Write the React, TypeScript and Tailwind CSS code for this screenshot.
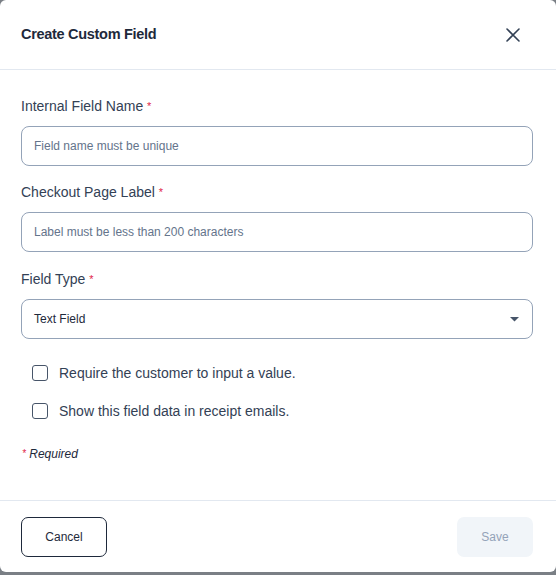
import React from "react";

function Label({ text }: { text: string }) {
  return (
    <div className="h-[20px] text-[14px] leading-[20px] text-[#334155]">
      {text} <span className="text-[#e11d48] text-[11px] align-top">*</span>
    </div>
  );
}

function Checkbox({ text }: { text: string }) {
  return (
    <label className="flex items-center h-[20px]">
      <span className="ml-[11px] w-[16px] h-[16px] rounded-[3px] border-[1.5px] border-[#475569] bg-white" />
      <span className="ml-[11px] text-[14px] leading-[20px] text-[#334155]">{text}</span>
    </label>
  );
}

export default function App() {
  return (
    <div
      className="w-[556px] h-[575px] bg-[#7a7f85]"
      style={{ fontFamily: '"Liberation Sans", Arial, sans-serif' }}
    >
      <div className="w-[556px] h-[572px] bg-white rounded-[6px] flex flex-col">
        <div className="h-[70px] border-b border-[#e2e8f0] flex items-center justify-between pl-[21px] pr-[36px]">
          <div className="text-[14.5px] font-bold text-[#1e293b] tracking-[-0.3px]">Create Custom Field</div>
          <svg width="14" height="14" viewBox="0 0 14 14">
            <path d="M1 1L13 13M13 1L1 13" stroke="#334155" strokeWidth="1.6" strokeLinecap="round" />
          </svg>
        </div>

        <div className="flex-1 pl-[21px] pr-[23px] pt-[26px]">
          <Label text="Internal Field Name" />
          <div className="mt-[10px] h-[40px] rounded-[8px] border border-[#94a3b8] flex items-center px-[12px] text-[12px] text-[#64748b]">
            Field name must be unique
          </div>

          <div className="mt-[16px]">
            <Label text="Checkout Page Label" />
          </div>
          <div className="mt-[10px] h-[40px] rounded-[8px] border border-[#94a3b8] flex items-center px-[12px] text-[12px] text-[#64748b]">
            Label must be less than 200 characters
          </div>

          <div className="mt-[17px]">
            <Label text="Field Type" />
          </div>
          <div className="mt-[10px] h-[40px] rounded-[8px] border border-[#94a3b8] flex items-center justify-between pl-[12px] pr-[13px] text-[12px] text-[#1e293b]">
            <span>Text Field</span>
            <svg width="9" height="5" viewBox="0 0 9 5">
              <path d="M0 0H9L4.5 4.5Z" fill="#475569" />
            </svg>
          </div>

          <div className="mt-[24px] flex flex-col gap-[18px]">
            <Checkbox text="Require the customer to input a value." />
            <Checkbox text="Show this field data in receipt emails." />
          </div>

          <div className="mt-[25px] pl-[1px] text-[12px] italic text-[#1e293b] leading-[16px]">
            <span className="text-[#e11d48] text-[10px] align-top">*</span> Required
          </div>
        </div>

        <div className="h-[72px] border-t border-[#e2e8f0] flex items-start justify-between pl-[21px] pr-[23px] pt-[16px]">
          <button className="w-[86px] h-[40px] rounded-[7px] border border-[#1e293b] text-[12px] text-[#1e293b] bg-white">
            Cancel
          </button>
          <button className="w-[76px] h-[40px] rounded-[7px] bg-[#f1f5f9] text-[12px] text-[#94a3b8]">
            Save
          </button>
        </div>
      </div>
    </div>
  );
}
